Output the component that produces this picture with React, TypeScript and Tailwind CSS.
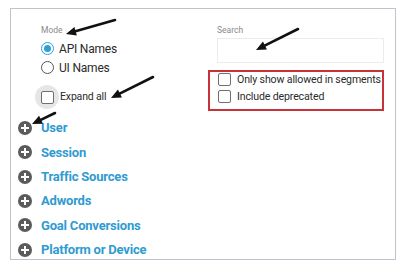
import React from "react";

type Pt = [number, number];

function Arrow({ from, to }: { from: Pt; to: Pt }) {
  const [x1, y1] = from;
  const [x2, y2] = to;
  const dx = x2 - x1;
  const dy = y2 - y1;
  const len = Math.hypot(dx, dy);
  const ux = dx / len;
  const uy = dy / len;
  const hl = 10;
  const hw = 4.5;
  const bx = x2 - ux * hl;
  const by = y2 - uy * hl;
  const p1 = `${x2},${y2}`;
  const p2 = `${bx - uy * hw},${by + ux * hw}`;
  const p3 = `${bx + uy * hw},${by - ux * hw}`;
  return (
    <g>
      <line x1={x1} y1={y1} x2={bx + ux * 2} y2={by + uy * 2} stroke="#111" strokeWidth={2.6} strokeLinecap="round" />
      <polygon points={`${p1} ${p2} ${p3}`} fill="#111" />
    </g>
  );
}

function Checkbox() {
  return <span className="block w-[13px] h-[13px] border border-[#6f6f6f] rounded-[2px] bg-white shrink-0" />;
}

function PlusIcon() {
  return (
    <span className="relative flex items-center justify-center w-[14px] h-[14px] rounded-full bg-[#5b5b5b] shrink-0">
      <span className="absolute w-[8px] h-[2px] bg-white" />
      <span className="absolute w-[2px] h-[8px] bg-white" />
    </span>
  );
}

const items = ["User", "Session", "Traffic Sources", "Adwords", "Goal Conversions", "Platform or Device"];

export default function App() {
  return (
    <div className="relative w-[400px] h-[267px] bg-white overflow-hidden font-['Roboto','Liberation_Sans',sans-serif]">
      <div className="pt-[8px] pl-[10px]">
        <div className="w-[386px] h-[252px] border border-[#bcc5ce]">
          <div className="flex">
            <div className="w-[197px] pl-[30px] pt-[15px]">
              <div className="h-[12px] leading-[12px] text-[8.5px] text-[#8a8a8a]">Mode</div>
              <div className="mt-[3px] flex flex-col">
                <div className="h-[19px] flex items-center">
                  <span className="flex items-center justify-center w-[13px] h-[13px] rounded-full border-[1.5px] border-[#2e9fd4]">
                    <span className="w-[7px] h-[7px] rounded-full bg-[#2e9fd4]" />
                  </span>
                  <span className="ml-[5px] text-[12px] text-[#2b2b2b] tracking-[-0.2px]">API Names</span>
                </div>
                <div className="h-[19px] flex items-center">
                  <span className="w-[13px] h-[13px] rounded-full border-[1.3px] border-[#555]" />
                  <span className="ml-[5px] text-[12px] text-[#2b2b2b] tracking-[-0.2px]">UI Names</span>
                </div>
              </div>
              <div className="mt-[8px] h-[24px] flex items-center">
                <span className="-ml-[6px] flex items-center justify-center w-[24px] h-[24px] rounded-full bg-[#e6e6e6]">
                  <Checkbox />
                </span>
                <span className="ml-[1px] text-[10.5px] text-[#2b2b2b] tracking-[-0.15px]">Expand all</span>
              </div>
            </div>
            <div className="w-[177px] pt-[15px]">
              <div className="pl-[9px] h-[12px] leading-[12px] text-[8.5px] text-[#8a8a8a]">Search</div>
              <div className="mt-[2px] ml-[9px] w-[167px] h-[25px] border border-[#ececec]" />
              <div className="mt-[7px] w-[176px] h-[41px] border-2 border-[#c8333a] pl-[8px] pt-[1px] flex flex-col gap-[4px]">
                <div className="h-[13px] flex items-center">
                  <Checkbox />
                  <span className="ml-[6px] text-[10.6px] text-[#2b2b2b] tracking-[-0.15px] whitespace-nowrap">Only show allowed in segments</span>
                </div>
                <div className="h-[13px] flex items-center">
                  <Checkbox />
                  <span className="ml-[6px] text-[10.6px] text-[#2b2b2b] tracking-[-0.15px] whitespace-nowrap">Include deprecated</span>
                </div>
              </div>
            </div>
          </div>
          <div className="mt-[5px] pl-[7px] flex flex-col">
            {items.map((it) => (
              <div key={it} className="h-[24.3px] flex items-center">
                <PlusIcon />
                <span className="ml-[9px] text-[13px] font-bold text-[#2f9bd1] tracking-[-0.2px] whitespace-nowrap">{it}</span>
              </div>
            ))}
          </div>
        </div>
      </div>
      <svg className="absolute inset-0 pointer-events-none" width={400} height={267} viewBox="0 0 400 267">
        <Arrow from={[115, 20]} to={[66, 34]} />
        <Arrow from={[153, 77]} to={[111, 98]} />
        <Arrow from={[55, 113]} to={[32, 124]} />
        <Arrow from={[298, 29]} to={[256, 50]} />
      </svg>
    </div>
  );
}
